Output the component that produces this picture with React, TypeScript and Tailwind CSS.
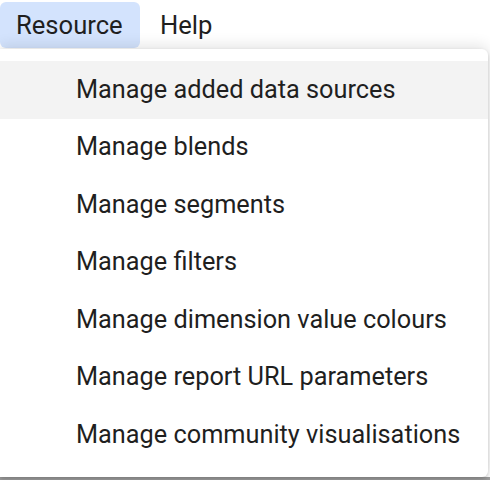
const items = [
  'Manage added data sources',
  'Manage blends',
  'Manage segments',
  'Manage filters',
  'Manage dimension value colours',
  'Manage report URL parameters',
  'Manage community visualisations',
]

export default function App() {
  return (
    <div className="relative w-[490px] h-[480px] overflow-hidden bg-white font-['Roboto',sans-serif] text-[#1f1f1f]">
      {/* menu bar */}
      <div className="flex items-center h-[48px] pt-[2px] text-[25.6px]">
        <div className="flex items-center h-[46px] w-[140px] pl-[16px] rounded-[6px] bg-[#d3e3fd]">Resource</div>
        <div className="pl-[20px]">Help</div>
      </div>

      {/* page strip peeking under the menu */}
      <div className="absolute left-0 right-0 bottom-0 h-[3px] bg-[#9e9e9e]" />

      {/* dropdown */}
      <div className="absolute left-0 top-[49px] w-[488px] h-[428px] py-[12px] bg-white rounded-r-[6px] shadow-[0_-4px_14px_rgba(0,0,0,0.1),0_2px_4px_rgba(0,0,0,0.2)]">
        {items.map((label, i) => (
          <div
            key={label}
            className={`flex items-center h-[57.5px] pl-[76px] text-[25.3px] ${i === 0 ? 'bg-[#f3f3f3]' : ''}`}
          >
            {label}
          </div>
        ))}
      </div>
    </div>
  )
}
